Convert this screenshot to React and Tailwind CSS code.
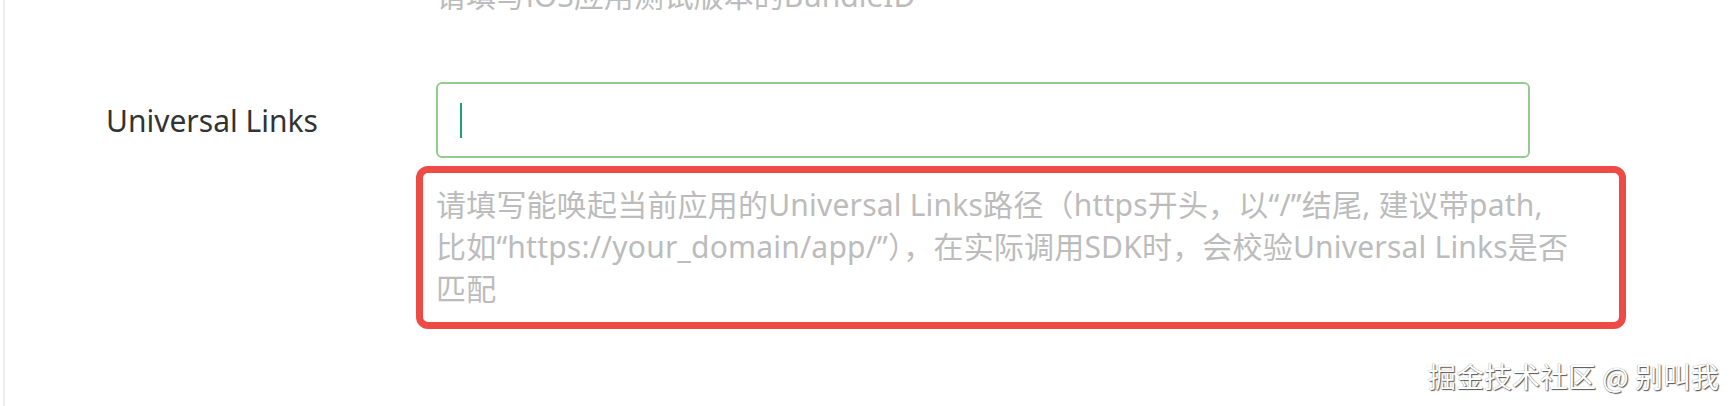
import React from "react";

const font = { fontFamily: '"Noto Sans", "Noto Sans CJK SC", sans-serif' };

export default function App() {
  return (
    <div
      className="relative h-[406px] w-[1734px] overflow-hidden bg-white"
      style={font}
    >
      <div className="ml-[3px] flex h-full flex-col border-l-2 border-[#ececec] pl-[101px]">
        {/* previous field hint, scrolled mostly out of view */}
        <div className="ml-[330px] mt-[-25px] text-[30px] leading-[42px] text-[#bcbcbc] whitespace-nowrap">
          请填写iOS应用测试版本的BundleID
        </div>

        {/* Universal Links row */}
        <div className="mt-[65px] flex items-center">
          <label className="w-[330px] shrink-0 pt-[2px] text-[30px] leading-[42px] text-[#333333]">
            Universal Links
          </label>
          <div className="flex h-[76px] w-[1094px] items-center rounded-[6px] border-2 border-[#92cd8f] bg-white">
            <span className="ml-[22px] h-[35px] w-[2px] bg-[#19a86b]" />
          </div>
        </div>

        {/* hint */}
        <div className="relative ml-[330px] mt-[26px] w-fit">
          <p className="text-[30px] leading-[42px] tracking-[0.2px] text-[#bcbcbc] whitespace-nowrap">
            请填写能唤起当前应用的Universal Links路径（https开头，以“/”结尾, 建议带path,
            <br />
            比如“https://your_domain/app/”），在实际调用SDK时，会校验Universal Links是否
            <br />
            匹配
          </p>
          <div className="pointer-events-none absolute left-[-20px] top-[-18px] h-[163px] w-[1210px] rounded-[12px] border-[7px] border-[#ef4b45]" />
        </div>
      </div>

      {/* watermark */}
      <div
        className="absolute right-[15px] top-[360px] text-[28px] leading-[32px] text-white [text-shadow:1px_1px_1px_#555,0_0_1px_#777]"
        style={{ fontFamily: '"Noto Sans CJK SC", sans-serif' }}
      >
        掘金技术社区 @ 别叫我
      </div>
    </div>
  );
}
